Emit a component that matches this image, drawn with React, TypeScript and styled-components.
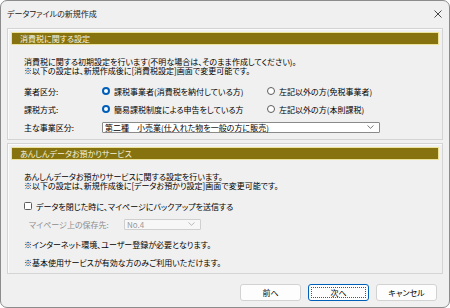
import { createGlobalStyle, styled } from "styled-components";

const GlobalStyle = createGlobalStyle`
    html, body {
        margin: 0;
        padding: 0;
        background: #ffffff;
    }
    body {
        font-family: "Noto Sans CJK JP", "Noto Sans", sans-serif;
        font-size: 8px;
        font-feature-settings: "palt";
        color: #000;
    }
`;

const Window = styled.div`
    width: 450px;
    height: 308px;
    box-sizing: border-box;
    border: 1px solid #8c8c8c;
    border-radius: 7px;
    background: #f0f0f0;
    display: flex;
    flex-direction: column;
    overflow: hidden;
`;

const TitleBar = styled.div`
    height: 25px;
    display: flex;
    align-items: center;
    justify-content: space-between;
    padding: 0 7px 2px 6px;
    font-size: 8px;
    color: #1a1a1a;
`;

const CloseButton = styled.span`
    display: flex;
    align-items: center;
`;

const Content = styled.div`
    display: flex;
    flex-direction: column;
    gap: 3px;
    padding: 0 6px;
`;

const Panel = styled.section<{ $height: number }>`
    height: ${(p) => p.$height}px;
    box-sizing: border-box;
    border: 1px solid #d4d4d4;
    box-shadow: inset 1px 1px 0 #fbfbfb;
    padding: 3px;
    display: flex;
    flex-direction: column;
`;

const PanelHeader = styled.div`
    height: 13px;
    box-sizing: border-box;
    background: #877210;
    border: 1px solid #ede29a;
    color: #f6f2de;
    padding-left: 8px;
    display: flex;
    align-items: center;
    line-height: 1;
`;

const Description = styled.p<{ $top: number }>`
    margin: ${(p) => p.$top}px 0 0 13px;
    line-height: 9px;
`;

const FormRows = styled.div<{ $top: number; $gap: number }>`
    margin: ${(p) => p.$top}px 0 0 13px;
    display: flex;
    flex-direction: column;
    gap: ${(p) => p.$gap}px;
`;

const Row = styled.div<{ $indent?: number }>`
    height: 12px;
    display: flex;
    align-items: center;
    padding-left: ${(p) => p.$indent ?? 0}px;
`;

const Label = styled.span<{ $width: number; $disabled?: boolean }>`
    width: ${(p) => p.$width}px;
    flex-shrink: 0;
    color: ${(p) => (p.$disabled ? "#8d8d8d" : "#000")};
`;

const Option = styled.label<{ $width?: number }>`
    display: flex;
    align-items: center;
    gap: 4px;
    width: ${(p) => (p.$width ? `${p.$width}px` : "auto")};
    white-space: nowrap;
`;

const RadioDot = styled.span<{ $checked?: boolean }>`
    width: 8px;
    height: 8px;
    box-sizing: border-box;
    border-radius: 50%;
    flex-shrink: 0;
    background: #fff;
    border: ${(p) => (p.$checked ? "2.5px solid #005fb8" : "1px solid #5c5c5c")};
`;

const CheckBox = styled.span`
    width: 8px;
    height: 8px;
    box-sizing: border-box;
    border: 1px solid #5c5c5c;
    border-radius: 1.5px;
    background: #fff;
    flex-shrink: 0;
`;

const Select = styled.div<{ $width: number; $disabled?: boolean }>`
    width: ${(p) => p.$width}px;
    height: 11px;
    box-sizing: border-box;
    border: 1px solid ${(p) => (p.$disabled ? "#cfcfcf" : "#8a8a8a")};
    background: ${(p) => (p.$disabled ? "#f7f7f7" : "#fff")};
    color: ${(p) => (p.$disabled ? "#9a9a9a" : "#000")};
    border-radius: 1px;
    display: flex;
    align-items: center;
    justify-content: space-between;
    padding: 0 5px 0 2px;
    white-space: nowrap;
`;

const Chevron = ({ color }: { color: string }) => (
    <svg width="7" height="4" viewBox="0 0 7 4">
        <path d="M0.5 0.5 L3.5 3.3 L6.5 0.5" fill="none" stroke={color} strokeWidth="0.8" />
    </svg>
);

const Note = styled.p<{ $top: number }>`
    margin: ${(p) => p.$top}px 0 0 13px;
    line-height: 9px;
`;

const ButtonBar = styled.div`
    display: flex;
    justify-content: flex-end;
    gap: 7px;
    padding: 10px 12px 0 0;
`;

const Button = styled.button<{ $default?: boolean }>`
    width: 61px;
    height: 17px;
    box-sizing: border-box;
    font: inherit;
    font-size: 8px;
    color: #000;
    background: #fdfdfd;
    border: 1px solid ${(p) => (p.$default ? "#005fb8" : "#d2d2d2")};
    border-radius: 3px;
    padding: 0;
    position: relative;
    display: flex;
    align-items: center;
    justify-content: center;
    ${(p) =>
        p.$default &&
        `
        &::after {
            content: "";
            position: absolute;
            inset: 2px;
            border: 1px dotted #555;
        }
    `}
`;

const App = () => {
    return (
        <>
            <GlobalStyle />
            <Window>
                <TitleBar>
                    <span>データファイルの新規作成</span>
                    <CloseButton>
                        <svg width="8" height="8" viewBox="0 0 8 8">
                            <path d="M0.5 0.5 L7.5 7.5 M7.5 0.5 L0.5 7.5" stroke="#333" strokeWidth="0.9" />
                        </svg>
                    </CloseButton>
                </TitleBar>
                <Content>
                    <Panel $height={112}>
                        <PanelHeader>消費税に関する設定</PanelHeader>
                        <Description $top={12}>
                            消費税に関する初期設定を行います(不明な場合は、そのまま作成してください)。
                            <br />
                            ※以下の設定は、新規作成後に[消費税設定]画面で変更可能です。
                        </Description>
                        <FormRows $top={10} $gap={6}>
                            <Row>
                                <Label $width={78}>業者区分:</Label>
                                <Option $width={165}>
                                    <RadioDot $checked />
                                    課税事業者(消費税を納付している方)
                                </Option>
                                <Option>
                                    <RadioDot />
                                    左記以外の方(免税事業者)
                                </Option>
                            </Row>
                            <Row>
                                <Label $width={78}>課税方式:</Label>
                                <Option $width={165}>
                                    <RadioDot $checked />
                                    簡易課税制度による申告をしている方
                                </Option>
                                <Option>
                                    <RadioDot />
                                    左記以外の方(本則課税)
                                </Option>
                            </Row>
                            <Row>
                                <Label $width={78}>主な事業区分:</Label>
                                <Select $width={278}>
                                    <span>第二種　小売業(仕入れた物を一般の方に販売)</span>
                                    <Chevron color="#555" />
                                </Select>
                            </Row>
                        </FormRows>
                    </Panel>
                    <Panel $height={131}>
                        <PanelHeader>あんしんデータお預かりサービス</PanelHeader>
                        <Description $top={12}>
                            あんしんデータお預かりサービスに関する設定を行います。
                            <br />
                            ※以下の設定は、新規作成後に[データお預かり設定]画面で変更可能です。
                        </Description>
                        <FormRows $top={10} $gap={6}>
                            <Row>
                                <Option>
                                    <CheckBox />
                                    データを閉じた時に、マイページにバックアップを送信する
                                </Option>
                            </Row>
                            <Row $indent={5}>
                                <Label $width={95} $disabled>
                                    マイページ上の保存先:
                                </Label>
                                <Select $width={77} $disabled>
                                    <span>No.4</span>
                                    <Chevron color="#aaa" />
                                </Select>
                            </Row>
                        </FormRows>
                        <Note $top={10}>※インターネット環境、ユーザー登録が必要となります。</Note>
                        <Note $top={9}>※基本使用サービスが有効な方のみご利用いただけます。</Note>
                    </Panel>
                </Content>
                <ButtonBar>
                    <Button>前へ</Button>
                    <Button $default>次へ</Button>
                    <Button>キャンセル</Button>
                </ButtonBar>
            </Window>
        </>
    );
};

export default App;
